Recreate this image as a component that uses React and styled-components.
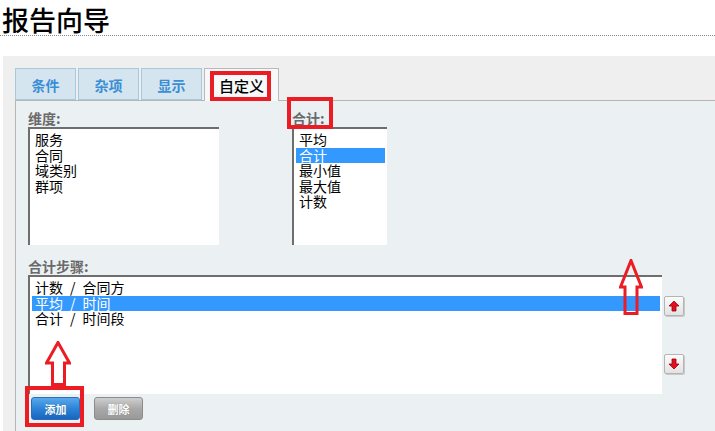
import React from 'react';
import styled, { createGlobalStyle } from 'styled-components';

const GlobalStyle = createGlobalStyle`
    html, body {
        margin: 0;
        padding: 0;
        background: #ffffff;
        overflow: hidden;
    }
    body {
        font-family: "Noto Sans CJK SC", "DejaVu Sans", sans-serif;
    }
`

const Page = styled.div`
    position: relative;
    width: 715px;
    height: 431px;
    overflow: hidden;
`

const Title = styled.h1`
    margin: 0;
    padding: 5px 0 1px 2px;
    font-size: 27px;
    line-height: 29px;
    font-weight: 500;
    color: #000;
    border-bottom: 1px dotted #8a8a8a;
`

const Wizard = styled.div`
    margin: 20px 0 0 3px;
    padding: 12px 0 0 12px;
    background-color: #efefef;
    height: 400px;
`

const Tabs = styled.div`
    display: flex;
    gap: 2px;
    height: 32px;
    position: relative;
    z-index: 1;
`

const Tab = styled.div`
    box-sizing: border-box;
    width: ${props => props.$width}px;
    height: ${props => props.$active ? 33 : 32}px;
    display: flex;
    align-items: center;
    justify-content: center;
    border: 1px solid ${props => props.$active ? '#b9b9b9' : '#a8c8dc'};
    border-bottom: ${props => props.$active ? 'none' : '1px solid #a8c8dc'};
    background-color: ${props => props.$active ? '#f7f8f9' : '#d5e5ef'};
    color: ${props => props.$active ? '#000' : '#3a8ed6'};
    font-size: ${props => props.$active ? 15 : 14}px;
    font-weight: ${props => props.$active ? 500 : 700};
    padding-top: ${props => props.$active ? 0 : 1}px;
`

const Panel = styled.div`
    border-top: 1px solid #b6b6b6;
    border-left: 1px solid #b6b6b6;
    background-color: #ebf0f3;
    padding: 9px 0 0 12px;
    height: 400px;
`

const TopRow = styled.div`
    display: flex;
    gap: 73px;
`

const Field = styled.div`
    display: flex;
    flex-direction: column;
`

const Label = styled.div`
    font-size: 14px;
    line-height: 17px;
    font-weight: 700;
    color: #6a6a6a;
    height: 17px;
`

const ListBox = styled.div`
    box-sizing: border-box;
    width: ${props => props.$width}px;
    height: ${props => props.$height}px;
    background-color: #fff;
    border-top: 2px solid #6e6e6e;
    border-left: 2px solid #6e6e6e;
    padding: 3px 2px 0 2px;
    display: flex;
    flex-direction: column;
`

const Option = styled.div`
    font-size: 14px;
    line-height: 15.5px;
    height: 15.5px;
    padding-left: 3px;
    white-space: pre;
    color: ${props => props.$selected ? '#fff' : '#000'};
    background-color: ${props => props.$selected ? '#3399ff' : 'transparent'};
`

const StepsSection = styled.div`
    margin-top: 13px;
`

const StepsRow = styled.div`
    display: flex;
    gap: 2px;
`

const MoveButtons = styled.div`
    display: flex;
    flex-direction: column;
    padding-top: 21px;
    gap: 38px;
`

const MoveButton = styled.button`
    box-sizing: border-box;
    width: 20px;
    height: 20px;
    padding: 0;
    border: 1px solid #b4b4b4;
    border-radius: 2px;
    background: linear-gradient(#fbfbfb, #e2e2e2);
    box-shadow: 1px 1px 0 #c9c9c9;
    display: flex;
    align-items: center;
    justify-content: center;
`

const Actions = styled.div`
    display: flex;
    gap: 14px;
    padding: 3px 0 0 3px;
`

const ActionButton = styled.button`
    box-sizing: border-box;
    width: 49px;
    height: 23px;
    padding: 0;
    border-radius: 3px;
    border: 1px solid ${props => props.$primary ? '#2a6fb8' : '#8c8c8c'};
    background: ${props => props.$primary
        ? 'linear-gradient(#5aa8ee, #2d84d6 50%, #1765c0)'
        : 'linear-gradient(#cfcfcf, #a9a9a9 50%, #999999)'};
    color: #fff;
    font-family: "Noto Sans CJK SC", sans-serif;
    font-size: 11px;
    font-weight: 700;
    text-shadow: 0 0 1px rgba(0,0,0,0.3);
`

const Mark = styled.div`
    position: absolute;
    z-index: 5;
    left: ${props => props.$left}px;
    top: ${props => props.$top}px;
    width: ${props => props.$width}px;
    height: ${props => props.$height}px;
    box-sizing: border-box;
    border: 4px solid #ec1c24;
    pointer-events: none;
`

const ArrowMark = styled.svg`
    position: absolute;
    z-index: 5;
    left: ${props => props.$left}px;
    top: ${props => props.$top}px;
    pointer-events: none;
`

function UpArrow({ left, top, width, height, headBase, shaftLeft, shaftRight }) {
    const pts = [
        [width / 2, 1.5],
        [width - 1.5, headBase],
        [shaftRight, headBase],
        [shaftRight, height - 1.5],
        [shaftLeft, height - 1.5],
        [shaftLeft, headBase],
        [1.5, headBase],
    ].map(p => p.join(',')).join(' ');
    return (
        <ArrowMark $left={left} $top={top} width={width} height={height}>
            <polygon points={pts} fill="none" stroke="#ec1c24" strokeWidth="3" strokeLinejoin="miter" />
        </ArrowMark>
    );
}

function MoveIcon({ down }) {
    return (
        <svg width="12" height="12" viewBox="0 0 12 12" style={down ? { transform: 'rotate(180deg)' } : undefined}>
            <polygon points="6,1 11,6 8,6 8,11 4,11 4,6 1,6" fill="#e0101c" stroke="#9a0010" strokeWidth="0.8" />
        </svg>
    );
}

const tabs = [
    { label: '条件', width: 61 },
    { label: '杂项', width: 61 },
    { label: '显示', width: 61 },
    { label: '自定义', width: 75, active: true },
];

const dimensions = ['服务', '合同', '域类别', '群项'];
const totals = ['平均', '合计', '最小值', '最大值', '计数'];
// en spaces around the slash, the original list pads it wider than a normal space
const steps = ['计数\u2002/\u2002合同方', '平均\u2002/\u2002时间', '合计\u2002/\u2002时间段'];

export default function App() {
    return (
        <Page>
            <GlobalStyle />
            <Title>报告向导</Title>
            <Wizard>
                <Tabs>
                    {tabs.map(t => (
                        <Tab key={t.label} $width={t.width} $active={t.active}>{t.label}</Tab>
                    ))}
                </Tabs>
                <Panel>
                    <TopRow>
                        <Field>
                            <Label>维度:</Label>
                            <ListBox $width={191} $height={118}>
                                {dimensions.map(d => <Option key={d}>{d}</Option>)}
                            </ListBox>
                        </Field>
                        <Field>
                            <Label>合计:</Label>
                            <ListBox $width={95} $height={118}>
                                {totals.map(t => <Option key={t} $selected={t === '合计'}>{t}</Option>)}
                            </ListBox>
                        </Field>
                    </TopRow>
                    <StepsSection>
                        <Label>合计步骤:</Label>
                        <StepsRow>
                            <ListBox $width={634} $height={119}>
                                {steps.map((s, i) => <Option key={s} $selected={i === 1}>{s}</Option>)}
                            </ListBox>
                            <MoveButtons>
                                <MoveButton><MoveIcon /></MoveButton>
                                <MoveButton><MoveIcon down /></MoveButton>
                            </MoveButtons>
                        </StepsRow>
                        <Actions>
                            <ActionButton $primary>添加</ActionButton>
                            <ActionButton>删除</ActionButton>
                        </Actions>
                    </StepsSection>
                </Panel>
            </Wizard>

            <Mark $left={210} $top={71} $width={61} $height={30} />
            <Mark $left={287} $top={97} $width={46} $height={32} />
            <Mark $left={25} $top={386} $width={59} $height={41} />
            <UpArrow left={45} top={341} width={26} height={45} headBase={22} shaftLeft={7.5} shaftRight={19.5} />
            <UpArrow left={619} top={259} width={24} height={56} headBase={28} shaftLeft={6} shaftRight={18} />
        </Page>
    );
}
